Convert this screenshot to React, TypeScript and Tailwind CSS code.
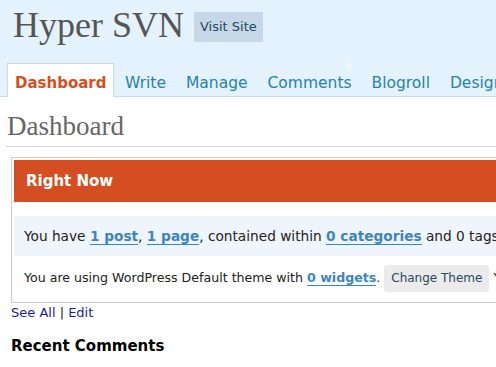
import React from "react";

const sans = { fontFamily: '"DejaVu Sans", Verdana, sans-serif' };

export default function App() {
  return (
    <div className="w-[496px] h-[367px] overflow-hidden bg-white" style={sans}>
      <div className="w-[760px]">
        {/* Header */}
        <div className="bg-[#e4f2fd] border-b border-[#c6d9e9]">
          <div className="h-[63px] flex items-start pl-[13px]">
            <h1
              className="mt-[7px] text-[36px] leading-[36px] text-[#555555] font-normal"
              style={{ fontFamily: '"Liberation Serif", "Times New Roman", serif' }}
            >
              Hyper SVN
            </h1>
            <span className="ml-[10px] mt-[12px] h-[30px] px-[6px] flex items-center bg-[#c6d8e7] text-[#264761] text-[13px]">
              Visit Site
            </span>
          </div>
          <ul className="h-[33px] flex items-start pl-[7px] text-[15.5px] leading-[18px] text-[#2583ad]">
            <li className="h-[34px] w-[107px] bg-white border border-b-0 border-[#c6d9e9] pl-[7px] pt-[10px] font-bold text-[15px] text-[#d54e21]">
              Dashboard
            </li>
            <li className="h-[33px] pl-[11px] pr-[10px] pt-[11px]">Write</li>
            <li className="h-[33px] px-[10px] pt-[11px]">Manage</li>
            <li className="h-[33px] px-[10px] pt-[11px]">
              <span className="relative">
                Comments
                <span className="absolute right-0 top-[-10px] text-[8px] leading-[8px] text-white">0</span>
              </span>
            </li>
            <li className="h-[33px] px-[10px] pt-[11px]">Blogroll</li>
            <li className="h-[33px] px-[10px] pt-[11px]">Design</li>
            <li className="h-[33px] px-[10px] pt-[11px]">Settings</li>
          </ul>
        </div>

        {/* Heading */}
        <div className="ml-[6px] mt-[14px] pb-[5px] border-b border-[#d6d6d6]">
          <h2
            className="pl-px text-[27px] leading-[30px] text-[#666666] font-normal"
            style={{ fontFamily: '"Liberation Serif", "Times New Roman", serif' }}
          >
            Dashboard
          </h2>
        </div>

        {/* Right Now box */}
        <div className="ml-[11px] mt-[10px] border border-[#cccccc] p-[2px]">
          <div className="h-[42px] flex items-center px-[12px] bg-[#d54e21] text-white font-bold text-[15px] leading-[18px]">
            Right Now
          </div>
          <div className="h-[14px]" />
          <div className="h-[40px] flex items-center pl-[10px] bg-[#eff5fc] text-[13.7px] text-[#222222] whitespace-nowrap">
            <span>
              You have{" "}
              <a className="font-bold text-[#3d85c0] border-b border-[#3d85c0]">1 post</a>,{" "}
              <a className="font-bold text-[#3d85c0] border-b border-[#3d85c0]">1 page</a>, contained within{" "}
              <a className="font-bold text-[#3d85c0] border-b border-[#3d85c0]">0 categories</a> and 0 tags.
            </span>
          </div>
          <div className="h-[44px] flex items-center pl-[10px] text-[12.6px] text-[#222222] whitespace-nowrap">
            <span>
              You are using WordPress Default theme with{" "}
              <a className="font-bold text-[#3d85c0] border-b border-[#3d85c0]">0 widgets</a>.
            </span>
            <span className="ml-[4px] h-[27px] px-[7px] flex items-center rounded-[3px] bg-[#ebebeb] text-[#264761] text-[12px]">
              Change Theme
            </span>
            <span className="ml-[4px]">You can</span>
          </div>
        </div>

        <div className="ml-[11px] mt-[2px] text-[13px] leading-[15px] text-[#222222]">
          <a className="text-[#1a1aa6]">See All</a> | <a className="text-[#1a1aa6]">Edit</a>
        </div>

        <h3 className="ml-[11px] mt-[17px] text-[15px] leading-[18px] font-bold text-black">
          Recent Comments
        </h3>
      </div>
    </div>
  );
}
